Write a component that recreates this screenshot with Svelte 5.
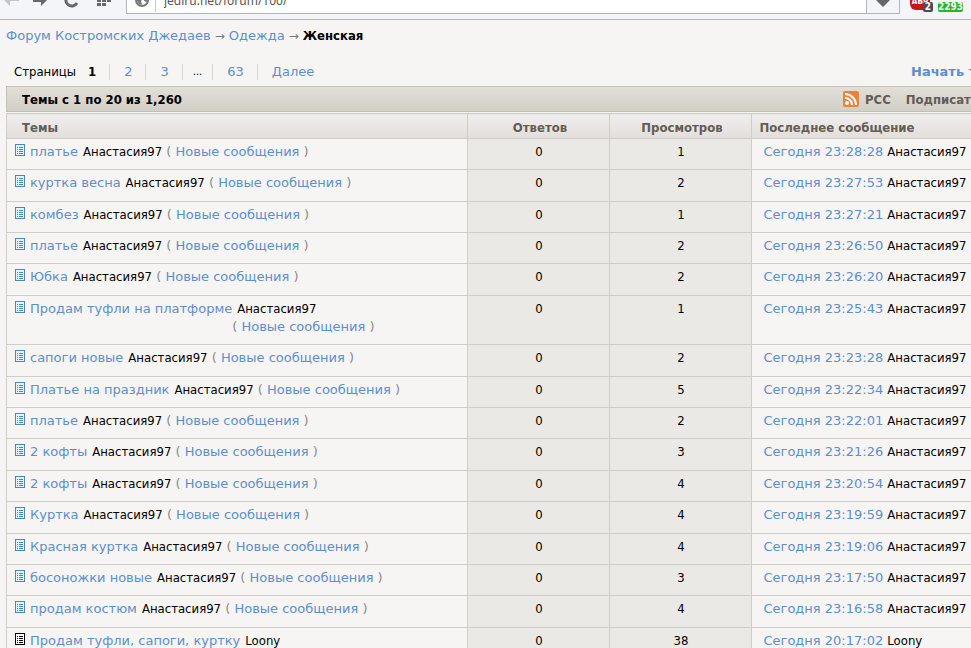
<script lang="ts">
	interface Topic {
		title: string;
		author: string;
		views: number;
		time: string;
		unread: boolean;
	}

	function topic(title: string, views: number, time: string, author = 'Анастасия97', unread = true): Topic {
		return { title, author, views, time, unread };
	}

	const topics: Topic[] = [
		topic('платье', 1, '23:28:28'),
		topic('куртка весна', 2, '23:27:53'),
		topic('комбез', 1, '23:27:21'),
		topic('платье', 2, '23:26:50'),
		topic('Юбка', 2, '23:26:20'),
		topic('Продам туфли на платформе', 1, '23:25:43'),
		topic('сапоги новые', 2, '23:23:28'),
		topic('Платье на праздник', 5, '23:22:34'),
		topic('платье', 2, '23:22:01'),
		topic('2 кофты', 3, '23:21:26'),
		topic('2 кофты', 4, '23:20:54'),
		topic('Куртка', 4, '23:19:59'),
		topic('Красная куртка', 4, '23:19:06'),
		topic('босоножки новые', 3, '23:17:50'),
		topic('продам костюм', 4, '23:16:58'),
		topic('Продам туфли, сапоги, куртку', 38, '20:17:02', 'Loony', false)
	];

	let address = $state('jediru.net/forum/100/');
</script>

<div class="browser">
	<div class="toolbar">
		<button class="tool back" aria-label="Back">
			<svg width="16" height="16" viewBox="0 0 16 16"><path d="M15 7H6V2L0 8l6 6V9h9z" fill="#c4c5c8" /></svg>
		</button>
		<button class="tool" aria-label="Forward">
			<svg width="16" height="16" viewBox="0 0 16 16"><path d="M1 6h8V2l6 6-6 6v-4H1z" fill="#66676b" /></svg>
		</button>
		<button class="tool" aria-label="Reload">
			<svg width="16" height="16" viewBox="0 0 16 16">
				<path d="M13 11a6 6 0 1 1 0-6" fill="none" stroke="#66676b" stroke-width="3" />
			</svg>
		</button>
		<button class="tool" aria-label="Speed dial">
			<svg width="16" height="16" viewBox="0 0 16 16" fill="#66676b">
				<path d="M1 2h4v3H1zM6 2h4v3H6zM11 2h4v3h-4zM1 7h4v3H1zM6 7h4v3H6zM11 7h4v3h-4zM1 11h4v3H1zM6 11h4v3H6z" />
			</svg>
		</button>
		<div class="address">
			<svg class="globe" width="14" height="14" viewBox="0 0 14 14">
				<circle cx="7" cy="7" r="6" fill="#fff" stroke="#77787c" stroke-width="2" />
				<path d="M2 5l4-2 2 3-2 2 1 4-3-1-2-3zM9 3l3 2v4l-3-1z" fill="#77787c" />
			</svg>
			<input aria-label="Address" bind:value={address} />
			<button class="heart" aria-label="Bookmark">
				<svg width="16" height="16" viewBox="0 0 16 16">
					<path d="M8 15L1 8V4l3-2 4 2 4-2 3 2v4z" fill="#66676b" />
				</svg>
			</button>
		</div>
		<div class="extensions">
			<span class="ext adblock"><b>ABP</b><i>2</i></span>
			<span class="ext counter">2293</span>
		</div>
	</div>
</div>

<main>
	<nav class="crumbs">
		<a href="#forum">Форум Костромских Джедаев</a>
		<span>→</span>
		<a href="#clothes">Одежда</a>
		<span>→</span>
		<strong>Женская</strong>
	</nav>

	<div class="paging">
		<span class="label">Страницы</span>
		<ul>
			<li><strong>1</strong></li>
			<li><a href="#2">2</a></li>
			<li><a href="#3">3</a></li>
			<li class="skip">...</li>
			<li><a href="#63">63</a></li>
			<li><a href="#next">Далее</a></li>
		</ul>
		<a class="new-topic" href="#new">Начать т</a>
	</div>

	<div class="caption">
		<h2>Темы с 1 по 20 из 1,260</h2>
		<div class="actions">
			<a href="#rss">
				<svg width="16" height="16" viewBox="0 0 16 16">
					<rect width="16" height="16" rx="2" fill="#e8833a" />
					<circle cx="4" cy="12" r="2" fill="#fff" />
					<path d="M2 7a7 7 0 0 1 7 7M2 3a11 11 0 0 1 11 11" fill="none" stroke="#fff" stroke-width="2" />
				</svg>
				РСС
			</a>
			<a href="#subscribe">Подписат</a>
		</div>
	</div>

	<table>
		<thead>
			<tr>
				<th class="topic">Темы</th>
				<th class="count">Ответов</th>
				<th class="count">Просмотров</th>
				<th class="last">Последнее сообщение</th>
			</tr>
		</thead>
		<tbody>
			{#each topics as item (item.time)}
				<tr>
					<td>
						<div class="subject" class:read={!item.unread}>
							<svg width="10" height="12" viewBox="0 0 10 12" shape-rendering="crispEdges">
								<rect x="0.5" y="0.5" width="9" height="11" />
								<path d="M2 3.5h1M4 3.5h4M2 5.5h1M4 5.5h4M2 7.5h1M4 7.5h4M2 9.5h1M4 9.5h4" />
							</svg>
							<a href="#topic">{item.title}</a>
							<div class="meta">
								<span class="author">{item.author}</span>
								{#if item.unread}
									<span class="fresh">( <a href="#fresh">Новые сообщения</a> )</span>
								{/if}
							</div>
						</div>
					</td>
					<td class="number">0</td>
					<td class="number">{item.views}</td>
					<td class="post">
						<a href="#post">Сегодня {item.time}</a>
						<span class="author">{item.author}</span>
					</td>
				</tr>
			{/each}
		</tbody>
	</table>
</main>

<style>
	:global(body) {
		background: #f6f5f4;
		overflow: hidden;
		font: 13px/18px 'DejaVu Sans', Verdana, sans-serif;
		color: #000;
	}

	a {
		color: #5b8fce;
		text-decoration: none;
	}

	button {
		padding: 0;
		border: 0;
		background: none;
	}

	svg {
		display: block;
		flex: none;
	}

	/* Browser chrome, scrolled partly out of the window */
	.browser {
		display: flex;
		align-items: flex-end;
		height: 19px;
		overflow: hidden;
		background: #f4f5f9;
		border-bottom: 1px solid #b4b5ba;
	}

	.toolbar {
		display: flex;
		flex: 1;
		align-items: center;
		height: 38px;
	}

	.tool {
		width: 32px;
		display: flex;
		justify-content: center;
	}

	.tool.back {
		width: 24px;
	}

	.address {
		display: flex;
		flex: 1;
		align-items: center;
		box-sizing: border-box;
		height: 28px;
		margin-left: 6px;
		padding-left: 8px;
		background: #fff;
		border: 1px solid #b4b5ba;
	}

	.address input {
		flex: 1;
		min-width: 0;
		height: 24px;
		margin-left: 6px;
		padding: 0 8px;
		border: 0;
		border-left: 1px solid #c8c9cc;
		font: 12px/18px 'Noto Sans', sans-serif;
		color: #555;
	}

	.heart {
		display: flex;
		align-items: center;
		justify-content: center;
		width: 33px;
		height: 26px;
		background: #f4f5f9;
		border-left: 1px solid #b4b5ba;
	}

	.extensions {
		display: flex;
		align-items: center;
		gap: 5px;
		width: 61px;
		padding-left: 10px;
		font: bold 10px/10px 'DejaVu Sans Condensed', sans-serif;
	}

	.ext {
		flex: none;
		color: #fff;
	}

	.adblock {
		position: relative;
		width: 23px;
		height: 24px;
	}

	.adblock b {
		display: block;
		width: 20px;
		height: 22px;
		border-radius: 6px;
		background: #c4161c;
		font-size: 8px;
		line-height: 28px;
		text-align: center;
	}

	.adblock i {
		position: absolute;
		right: 0;
		bottom: 0;
		padding: 0 2px;
		border-radius: 2px;
		background: #4c4c4f;
		font-style: normal;
	}

	.counter {
		align-self: flex-end;
		border-radius: 2px;
		background: #23b52c;
	}

	main {
		padding-left: 6px;
	}

	.crumbs {
		display: flex;
		gap: 4px;
		padding-top: 7px;
	}

	.crumbs span {
		color: #777;
		font-size: 12px;
	}

	.paging {
		display: flex;
		align-items: center;
		margin-top: 18px;
		padding-left: 8px;
	}

	.crumbs strong,
	.paging strong,
	.label,
	.number,
	.author {
		font-family: 'DejaVu Sans Condensed', Tahoma, sans-serif;
	}

	.paging ul {
		display: flex;
		flex: 1;
		margin: 0;
		padding: 0;
		list-style: none;
	}

	.paging li {
		padding: 0 13px 0 14px;
		line-height: 16px;
		border-left: 1px solid #d8d6d2;
	}

	.paging li:first-child {
		padding-left: 12px;
		border-left: 0;
	}

	.paging .skip {
		padding: 0 10px;
		font-size: 10px;
	}

	.new-topic {
		width: 60px;
		white-space: nowrap;
		font-weight: bold;
	}

	.caption {
		display: flex;
		align-items: center;
		justify-content: space-between;
		box-sizing: border-box;
		height: 26px;
		margin: 5px 0 1px;
		padding: 2px 0 0 15px;
		background: linear-gradient(#e2dfd8, #d2cfc7);
		border: 1px solid #c5c0b5;
		border-right: 0;
	}

	h2 {
		margin: 0;
		font: bold 13px/18px 'DejaVu Sans Condensed', Tahoma, sans-serif;
	}

	.actions {
		display: flex;
		gap: 15px;
		width: 128px;
		white-space: nowrap;
	}

	.actions a {
		display: flex;
		gap: 6px;
		font: bold 13px/18px 'DejaVu Sans Condensed', Tahoma, sans-serif;
		color: #635c54;
	}

	table {
		width: 100%;
		table-layout: fixed;
		border-collapse: collapse;
		border-left: 1px solid #d0cdc6;
	}

	th {
		box-sizing: border-box;
		height: 25px;
		padding: 4px 0 0;
		background: linear-gradient(#f0eeed, #e2dedb);
		border: 1px solid #d0cdc6;
		border-right: 0;
		font: bold 13px/18px 'DejaVu Sans Condensed', Tahoma, sans-serif;
		color: #635c54;
	}

	.topic {
		padding-left: 15px;
		text-align: left;
	}

	.count {
		width: 142px;
		padding-left: 4px;
	}

	.last {
		width: 220px;
		padding-left: 8px;
		text-align: left;
	}

	td {
		padding: 4px 6px 8px;
		vertical-align: top;
		border-bottom: 1px solid #d0cdc6;
	}

	tr:nth-child(5n) td,
	tr:nth-child(5n + 2) td {
		padding-bottom: 9px;
	}

	.subject {
		display: flex;
		padding-left: 2px;
	}

	.subject svg {
		margin: 1px 5px 0 0;
		fill: #e4f4ff;
		stroke: #4a86c0;
	}

	.subject.read svg {
		fill: #fff;
		stroke: #000;
	}

	.subject > a {
		flex: none;
	}

	.meta {
		flex: 1;
		min-width: 0;
	}

	.meta .author {
		margin-left: 5px;
	}

	.fresh {
		white-space: nowrap;
		color: #8a8a8a;
	}

	td.number {
		padding-left: 8px;
		text-align: center;
		background: #eae9e5;
		border-left: 1px solid #d0cdc6;
	}

	td.post {
		padding-left: 12px;
		padding-right: 0;
		white-space: nowrap;
		border-left: 1px solid #d0cdc6;
	}
</style>
